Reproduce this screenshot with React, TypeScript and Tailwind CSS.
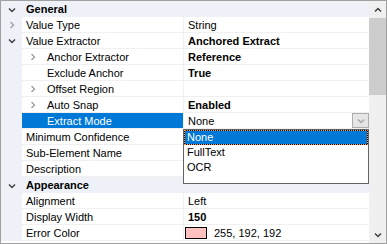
import React from "react";

type Row = {
  cat?: boolean;
  name: string;
  value?: string;
  bold?: boolean;
  chevron?: "right" | "down";
  level?: number;
  selected?: boolean;
  dropdown?: boolean;
  swatch?: string;
};

const rows: Row[] = [
  { cat: true, name: "General" },
  { name: "Value Type", value: "String", chevron: "right" },
  { name: "Value Extractor", value: "Anchored Extract", bold: true, chevron: "down" },
  { name: "Anchor Extractor", value: "Reference", bold: true, chevron: "right", level: 1 },
  { name: "Exclude Anchor", value: "True", bold: true, level: 1 },
  { name: "Offset Region", value: "", chevron: "right", level: 1 },
  { name: "Auto Snap", value: "Enabled", bold: true, chevron: "right", level: 1 },
  { name: "Extract Mode", value: "None", level: 1, selected: true, dropdown: true },
  { name: "Minimum Confidence", value: "" },
  { name: "Sub-Element Name", value: "" },
  { name: "Description", value: "" },
  { cat: true, name: "Appearance" },
  { name: "Alignment", value: "Left" },
  { name: "Display Width", value: "150", bold: true },
  { name: "Error Color", value: "255, 192, 192", swatch: "#ffc0c0" },
];

const Chevron = ({ dir, light }: { dir: "right" | "down" | "up"; light?: boolean }) => {
  const pts =
    dir === "down" ? "1,2.5 4,5.5 7,2.5" : dir === "up" ? "1,5.5 4,2.5 7,5.5" : "2.5,1 5.5,4 2.5,7";
  return (
    <svg width="8" height="8" viewBox="0 0 8 8">
      <polyline
        points={pts}
        fill="none"
        stroke={light ? "#a6a6a6" : "#404040"}
        strokeWidth="1.5"
      />
    </svg>
  );
};

const PropRow = ({ row }: { row: Row }) => {
  if (row.cat) {
    return (
      <div className="flex h-[16px] shrink-0 items-center bg-[#eef2f8] pt-px">
        <div className="flex w-[21px] justify-center">
          <Chevron dir="down" />
        </div>
        <span className="pl-[4px] font-bold">{row.name}</span>
      </div>
    );
  }

  const indent = row.level === 1;
  return (
    <div className="flex h-[16px] shrink-0">
      {/* gutter */}
      <div className="flex w-[21px] items-center justify-center bg-[#eef2f8]">
        {!indent && row.chevron && <Chevron dir={row.chevron} light={row.chevron === "right"} />}
      </div>

      {/* name */}
      <div
        className={`flex w-[161px] items-center border-b border-[#f0f0f0] pt-px ${
          row.selected ? "bg-[#0078d7] text-white" : "bg-white"
        }`}
      >
        {indent && (
          <div className="flex w-[21px] justify-center">
            {row.chevron && <Chevron dir={row.chevron} light />}
          </div>
        )}
        <span className="whitespace-nowrap pl-[4px]">{row.name}</span>
      </div>

      <div className="w-px bg-[#f0f0f0]" />

      {/* value */}
      <div className="relative flex flex-1 items-center border-b border-[#f0f0f0] bg-white pt-px">
        {row.swatch && (
          <div
            className="ml-[1px] h-[12px] w-[22px] border border-black"
            style={{ backgroundColor: row.swatch }}
          />
        )}
        <span
          className={`whitespace-nowrap ${row.swatch ? "pl-[7px]" : "pl-[4px]"} ${
            row.bold ? "font-bold" : ""
          }`}
        >
          {row.value}
        </span>
        {row.dropdown && (
          <div className="absolute right-0 top-0 flex h-[15px] w-[17px] items-center justify-center border border-[#adadad] bg-[#e5e5e5]">
            <Chevron dir="down" light />
          </div>
        )}
      </div>
    </div>
  );
};

export default function App() {
  return (
    <div
      className="relative flex h-[244px] w-[387px] overflow-hidden border border-[#a0a0a0] bg-white text-[11px] leading-none text-black"
      style={{ fontFamily: '"Liberation Sans", Arial, sans-serif' }}
    >
      {/* grid */}
      <div className="flex flex-1 flex-col overflow-hidden">
        {rows.map((r) => (
          <PropRow key={r.name} row={r} />
        ))}
      </div>

      {/* scrollbar */}
      <div className="flex w-[17px] flex-col bg-[#f0f0f0]">
        <div className="flex h-[17px] items-center justify-center">
          <Chevron dir="up" />
        </div>
        <div className="h-[77px] bg-[#cdcdcd]" />
        <div className="flex-1" />
        <div className="flex h-[17px] items-center justify-center">
          <Chevron dir="down" />
        </div>
      </div>

      {/* dropdown list */}
      <div className="absolute left-[182px] top-[128px] flex h-[55px] w-[186px] flex-col border border-[#646464] bg-white">
        <div className="h-[15px] border border-dotted border-[#ffa040] bg-black">
          <div className="flex h-full items-center bg-[#0078d7] pl-[2px] text-white">None</div>
        </div>
        <div className="flex h-[15px] items-center pl-[3px]">FullText</div>
        <div className="flex h-[15px] items-center pl-[3px]">OCR</div>
      </div>
    </div>
  );
}
